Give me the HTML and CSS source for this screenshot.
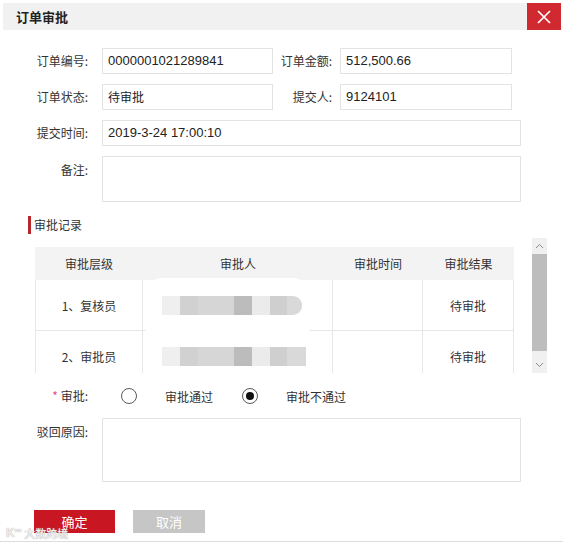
FILE: index.html
```html
<!DOCTYPE html>
<html lang="zh-CN">
<head>
<meta charset="utf-8">
<title>订单审批</title>
<link rel="stylesheet" href="styles.css">
</head>
<body>
<div class="dialog">
  <div class="titlebar">
    <div class="title">订单审批</div>
    <div class="close"><svg width="14" height="14" viewBox="0 0 14 14"><path d="M1 1L13 13M13 1L1 13" stroke="#fff" stroke-width="1.7" fill="none"/></svg></div>
  </div>
  <div class="form">
    <div class="row">
      <span class="label">订单编号:</span>
      <div class="field w1 num">0000001021289841</div>
      <span class="label label2">订单金额:</span>
      <div class="field w2 num">512,500.66</div>
    </div>
    <div class="row">
      <span class="label">订单状态:</span>
      <div class="field w1 cjk">待审批</div>
      <span class="label label2">提交人:</span>
      <div class="field w2 num">9124101</div>
    </div>
    <div class="row">
      <span class="label">提交时间:</span>
      <div class="field w3 num">2019-3-24 17:00:10</div>
    </div>
    <div class="row top">
      <span class="label tl">备注:</span>
      <div class="field w3 note"></div>
    </div>

    <div class="sec">审批记录</div>

    <div class="records">
      <div class="viewport">
        <table>
          <colgroup><col class="c1"><col class="c2"><col class="c3"><col class="c4"></colgroup>
          <thead>
            <tr><th>审批层级</th><th>审批人</th><th>审批时间</th><th>审批结果</th></tr>
          </thead>
          <tbody>
            <tr>
              <td>1、复核员</td>
              <td class="person"><span class="mosaic round"><i class="m1"></i><i class="m2"></i><i class="m3"></i><i class="m4"></i><i class="m5"></i><i class="m6"></i><i class="m7"></i></span></td>
              <td></td>
              <td>待审批</td>
            </tr>
            <tr>
              <td>2、审批员</td>
              <td class="person"><span class="mosaic"><i class="m1"></i><i class="m2"></i><i class="m3"></i><i class="m4"></i><i class="m5"></i><i class="m6"></i><i class="m7 wide"></i></span></td>
              <td></td>
              <td>待审批</td>
            </tr>
          </tbody>
        </table>
        <div class="smear"></div>
      </div>
      <div class="scrollbar">
        <div class="sb-up"><svg width="9" height="6" viewBox="0 0 9 6"><path d="M1 5L4.5 1.5L8 5" stroke="#8a8a8a" stroke-width="1" fill="none"/></svg></div>
        <div class="sb-thumb"></div>
        <div class="sb-down"><svg width="9" height="6" viewBox="0 0 9 6"><path d="M1 1L4.5 4.5L8 1" stroke="#8a8a8a" stroke-width="1" fill="none"/></svg></div>
      </div>
    </div>

    <div class="row radio-row">
      <span class="label"><span class="req">*</span> 审批:</span>
      <div class="radios">
        <span class="radio"></span><span class="opt opt1">审批通过</span>
        <span class="radio checked"></span><span class="opt">审批不通过</span>
      </div>
    </div>

    <div class="row top reason">
      <span class="label tl">驳回原因:</span>
      <div class="field w3 reason-box"></div>
    </div>

    <div class="buttons">
      <div class="btn ok">确定</div>
      <div class="btn cancel">取消</div>
    </div>
  </div>
</div>
<div class="baseline"></div>
<div class="watermark"><span class="wm-logo">K<sup>oo</sup></span><span class="wm-text">大数跨境</span></div>
</body>
</html>
```

FILE: styles.css
```css
* { box-sizing: border-box; }

body {
  margin: 0;
  width: 563px;
  height: 543px;
  overflow: hidden;
  position: relative;
  background: #fff;
  color: #333;
  font-family: "Noto Sans CJK SC", "Microsoft YaHei", sans-serif;
  font-size: 12px;
}

.dialog {
  margin: 3px 0 0 3px;
  width: 558px;
  height: 538px;
}

.titlebar {
  display: flex;
  height: 27px;
}

.title {
  flex: 1;
  background: #f1f1f1;
  padding-left: 13px;
  font-size: 13px;
  font-weight: bold;
  line-height: 27px;
  color: #222;
}

.close {
  width: 34px;
  background: #d02a30;
  display: flex;
  align-items: center;
  justify-content: center;
}

.form {
  padding: 18px 0 0 17px;
  display: flex;
  flex-direction: column;
}

.row {
  display: flex;
  align-items: center;
  margin-bottom: 10px;
}

.row.top { align-items: flex-start; }

.label {
  width: 68px;
  margin-right: 14px;
  text-align: right;
  white-space: nowrap;
  line-height: 18px;
}

.label.label2 {
  width: 59px;
  margin-right: 8px;
}

.label.tl { padding-top: 5px; }

.field {
  height: 26px;
  border: 1px solid #e3e3e3;
  padding-left: 5px;
  line-height: 24px;
  background: #fff;
  white-space: nowrap;
}

.num {
  font-family: "Liberation Sans", "Noto Sans CJK SC", sans-serif;
  font-size: 13px;
  color: #222;
}

.cjk {
  font-size: 12px;
  color: #222;
}

.w1 { width: 171px; }
.w2 { width: 172px; }
.w3 { width: 419px; }
.note { height: 46px; }

.sec {
  margin: 4px 0 0 8px;
  height: 18px;
  border-left: 3px solid #b7272d;
  padding-left: 3px;
  font-size: 12px;
  line-height: 18px;
}

.records {
  margin: 4px 0 0 15px;
  display: flex;
  height: 135px;
}

.viewport {
  position: relative;
  width: 497px;
  height: 135px;
  overflow: hidden;
  padding-top: 9px;
}

table {
  width: 479px;
  table-layout: fixed;
  border-collapse: separate;
  border-spacing: 0;
  font-size: 12px;
}

.c1 { width: 108px; }
.c2 { width: 190px; }
.c3 { width: 90px; }
.c4 { width: 91px; }

th {
  height: 33px;
  background: #f3f3f3;
  font-weight: normal;
  color: #333;
  text-align: center;
  padding: 0;
}

td {
  height: 51px;
  padding: 0;
  text-align: center;
  border-right: 1px solid #e6e6e6;
  border-bottom: 1px solid #e6e6e6;
}

td:first-child { border-left: 1px solid #e6e6e6; }

td.person {
  text-align: left;
  padding-left: 19px;
}

.mosaic {
  position: relative;
  z-index: 2;
  display: inline-flex;
  height: 19px;
  vertical-align: middle;
}

.mosaic i { display: block; height: 19px; }
.mosaic .m1 { width: 18px; background: #efefef; }
.mosaic .m2 { width: 18px; background: #d1d1d1; }
.mosaic .m3 { width: 36px; background: #d6d6d6; }
.mosaic .m4 { width: 18px; background: #bcbcbc; }
.mosaic .m5 { width: 18px; background: #ebebeb; }
.mosaic .m6 { width: 17px; background: #cfcfcf; }
.mosaic .m7 { width: 15px; background: #d9d9d9; }
.mosaic .m7.wide { width: 19px; }
.mosaic.round .m7 { border-radius: 0 9px 9px 0; }

.smear {
  position: absolute;
  z-index: 1;
  left: 110px;
  top: 40px;
  width: 165px;
  height: 66px;
  border-radius: 18px;
  background: #fff;
}

.scrollbar {
  width: 15px;
  height: 135px;
  display: flex;
  flex-direction: column;
  background: #f0f0f0;
}

.sb-up {
  height: 16px;
  display: flex;
  align-items: center;
  justify-content: center;
}

.sb-thumb {
  height: 97px;
  background: #bdbdbd;
}

.sb-down {
  height: 22px;
  display: flex;
  align-items: flex-end;
  justify-content: center;
  padding-bottom: 5px;
}

.radio-row {
  margin-top: 13px;
  height: 20px;
}

.req {
  color: #e0507f;
  font-size: 12px;
}

.radios {
  display: flex;
  align-items: center;
  padding-left: 19px;
  font-size: 12px;
}

.radio {
  width: 16px;
  height: 16px;
  border: 1px solid #5a5a5a;
  border-radius: 50%;
  display: flex;
  align-items: center;
  justify-content: center;
  background: #fff;
}

.radio.checked::after {
  content: "";
  width: 8px;
  height: 8px;
  border-radius: 50%;
  background: #111;
}

.opt { margin-left: 28px; }
.opt1 { width: 77px; }

.reason { margin-top: 2px; }
.reason-box { height: 64px; }

.buttons {
  display: flex;
  margin: 18px 0 0 14px;
}

.btn {
  height: 23px;
  line-height: 23px;
  text-align: center;
  color: #fff;
  font-size: 13px;
}

.btn.ok { width: 81px; background: #c91623; }
.btn.cancel { width: 72px; margin-left: 18px; background: #c6c6c6; }

.baseline {
  height: 1px;
  background: #dcdcdc;
}

.watermark {
  position: absolute;
  left: 6px;
  top: 526px;
  height: 14px;
  display: flex;
  align-items: center;
  color: rgba(255, 255, 255, 0.9);
  text-shadow: 0 0 1px #aaa, 0 0 1px #aaa;
  white-space: nowrap;
}

.wm-logo {
  font-family: "Liberation Sans", sans-serif;
  font-size: 13px;
  line-height: 14px;
  margin-right: 3px;
}

.wm-logo sup {
  font-size: 6px;
  line-height: 6px;
}

.wm-text {
  font-size: 11px;
  line-height: 14px;
}
```
